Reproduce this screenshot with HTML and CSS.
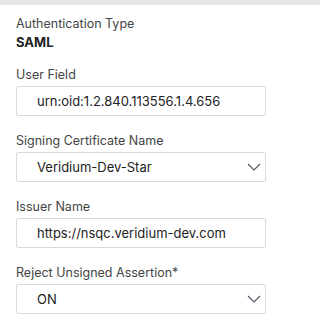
FILE: index.html
```html
<!DOCTYPE html>
<html lang="en">
<head>
    <meta charset="UTF-8">
    <meta name="viewport" content="width=device-width, initial-scale=1.0">
    <title>SAML Settings</title>
    <link rel="stylesheet" href="styles.css">
</head>
<body>
    <div class="top-bar"></div>
    <div class="panel">
        <div class="info">
            <div class="label">Authentication Type</div>
            <div class="value">SAML</div>
        </div>

        <div class="field">
            <label class="label">User Field</label>
            <div class="box">urn:oid:1.2.840.113556.1.4.656</div>
        </div>

        <div class="field">
            <label class="label">Signing Certificate Name</label>
            <div class="box select">
                <span>Veridium-Dev-Star</span>
                <svg class="chevron" width="14" height="8" viewBox="0 0 14 8"><path d="M1 1l6 6 6-6" fill="none" stroke="#555b66" stroke-width="1.2"/></svg>
            </div>
        </div>

        <div class="field">
            <label class="label">Issuer Name</label>
            <div class="box">https://nsqc.veridium-dev.com</div>
        </div>

        <div class="field">
            <label class="label">Reject Unsigned Assertion*</label>
            <div class="box select">
                <span>ON</span>
                <svg class="chevron" width="14" height="8" viewBox="0 0 14 8"><path d="M1 1l6 6 6-6" fill="none" stroke="#555b66" stroke-width="1.2"/></svg>
            </div>
        </div>
    </div>
</body>
</html>
```

FILE: styles.css
```css
body {
    margin: 0;
    padding: 0;
    font-family: 'Inter', 'Liberation Sans', sans-serif;
    font-size: 12.5px;
    color: #222;
    background: #fff;
}
.top-bar {
    height: 5px;
    background-color: #e5e5e5;
}
.panel {
    padding: 11px 16px 0 16px;
    display: flex;
    flex-direction: column;
    gap: 17px;
}
.info {
    display: flex;
    flex-direction: column;
    gap: 2px;
}
.label {
    display: block;
    color: #444;
    line-height: 16px;
}
.value {
    font-weight: 700;
    font-size: 13px;
    color: #222;
    line-height: 16px;
}
.field {
    display: flex;
    flex-direction: column;
    gap: 3px;
}
.box {
    width: 250px;
    height: 30px;
    box-sizing: border-box;
    border: 1px solid #d9d9d9;
    border-radius: 2px;
    padding: 0 10px 0 20px;
    display: flex;
    align-items: center;
    color: #222;
    font-size: 13px;
}
.select {
    justify-content: space-between;
}
.chevron {
    margin-right: -6px;
}
```
